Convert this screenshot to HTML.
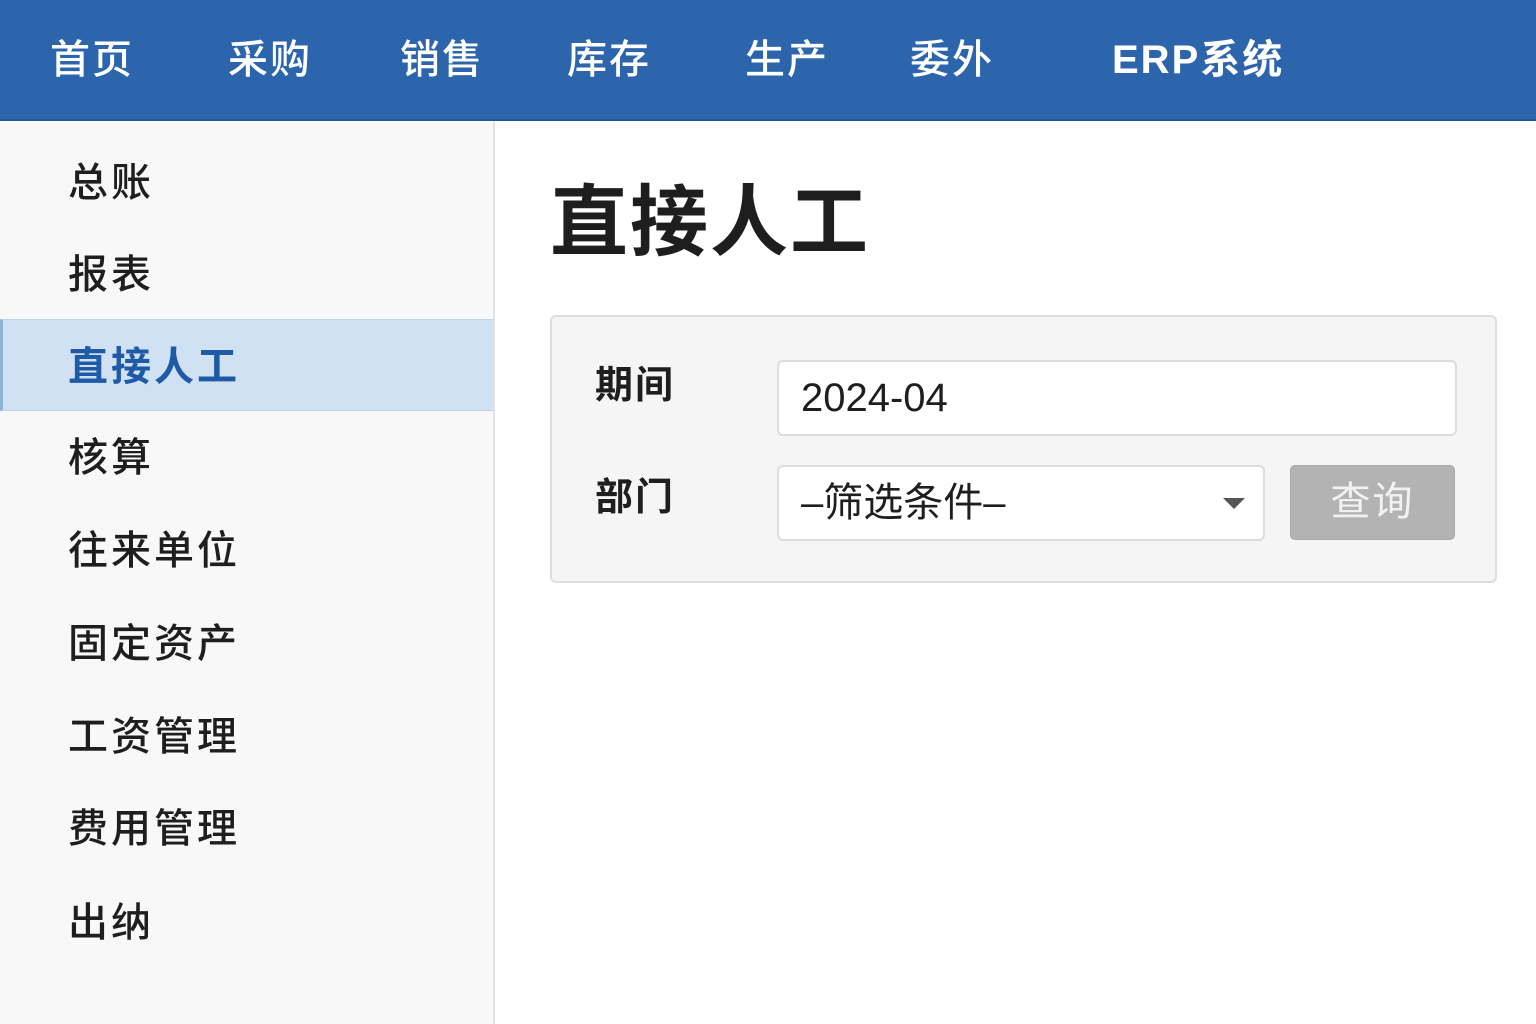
<!DOCTYPE html>
<html><head><meta charset="utf-8"><style>
*{margin:0;padding:0;box-sizing:border-box}
body{width:1536px;height:1024px;overflow:hidden;background:#fff;font-family:"Liberation Sans","Noto Sans CJK SC",sans-serif;position:relative}
.nav{position:absolute;left:0;top:0;width:1536px;height:121px;background:#2c65ab;border-bottom:2px solid #22589a}
.nav span{position:absolute;top:34px;font-size:40px;line-height:52px;color:#fff;font-weight:500;letter-spacing:2px}
.side{position:absolute;left:0;top:121px;width:495px;height:903px;background:#f8f8f8;border-right:2px solid #e2e2e2}
.act{position:absolute;left:0;top:319px;width:493px;height:92px;background:#cfe1f2;border-left:3px solid #8fb3d9;border-top:1px solid #bcd3ea;border-bottom:1px solid #bcd3ea}
.it{position:absolute;left:68px;font-size:40px;line-height:50px;color:#1e1e1e;font-weight:500;letter-spacing:3px}
h1{position:absolute;left:550px;top:176px;font-size:78px;line-height:92px;color:#1e1e1e;font-weight:700;letter-spacing:2px}
.panel{position:absolute;left:550px;top:315px;width:947px;height:268px;background:#f5f5f5;border:2px solid #dedede;border-radius:6px}
.lbl{position:absolute;left:595px;font-size:38px;line-height:50px;font-weight:700;color:#1e1e1e;letter-spacing:2px}
.box{position:absolute;background:#fff;border:2px solid #dcdcdc;border-radius:6px;font-size:40px;color:#1e1e1e;padding-left:22px;line-height:72px}
.btn{position:absolute;left:1290px;top:465px;width:165px;height:75px;background:#b3b3b3;border:1px solid #a8a8a8;border-radius:5px;color:#f2f2f2;font-size:40px;line-height:73px;text-align:center;letter-spacing:2px}
</style></head><body>
<div class="nav">
<span style="left:50px">首页</span><span style="left:228px">采购</span><span style="left:400px">销售</span><span style="left:567px">库存</span><span style="left:745px">生产</span><span style="left:910px">委外</span><span style="left:1112px;font-weight:700">ERP系统</span>
</div>
<div class="side"></div>
<div class="act"></div>
<div class="it" style="top:158px">总账</div>
<div class="it" style="top:250px">报表</div>
<div class="it" style="top:342px;color:#1f5aa6;font-weight:700">直接人工</div>
<div class="it" style="top:433px">核算</div>
<div class="it" style="top:526px">往来单位</div>
<div class="it" style="top:619px">固定资产</div>
<div class="it" style="top:712px">工资管理</div>
<div class="it" style="top:804px">费用管理</div>
<div class="it" style="top:898px">出纳</div>
<h1>直接人工</h1>
<div class="panel"></div>
<div class="lbl" style="top:361px">期间</div>
<div class="lbl" style="top:473px">部门</div>
<div class="box" style="left:777px;top:360px;width:680px;height:76px">2024-04</div>
<div class="box" style="left:777px;top:465px;width:488px;height:76px">–筛选条件–
<svg style="position:absolute;left:444px;top:31px" width="22" height="12"><polygon points="0,0 22,0 11,11" fill="#555"/></svg></div>
<div class="btn">查询</div>
</body></html>
